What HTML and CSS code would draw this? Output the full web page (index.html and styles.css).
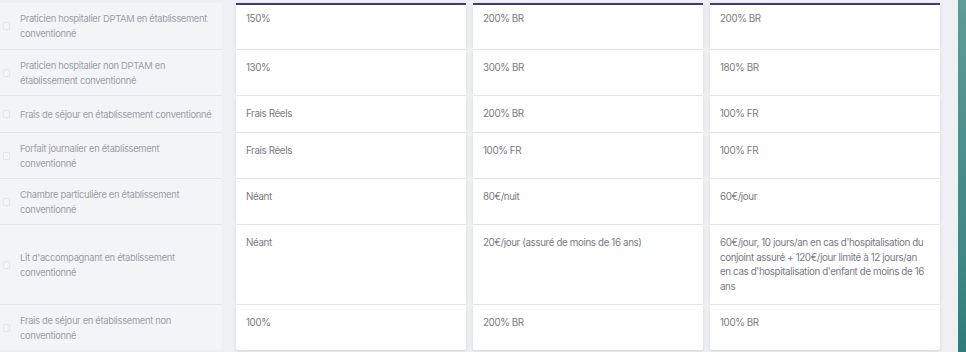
FILE: index.html
```html
<!DOCTYPE html>
<html lang="fr">
<head>
<meta charset="utf-8">
<link rel="stylesheet" href="styles.css">
</head>
<body>
<div class="page">
  <div class="table">
    <div class="label"><span class="check"></span><span>Praticien hospitalier DPTAM en établissement conventionné</span></div>
    <div class="cell c1 first">150%</div>
    <div class="cell c2 first">200% BR</div>
    <div class="cell c3 first">200% BR</div>

    <div class="label"><span class="check"></span><span>Praticien hospitalier non DPTAM en établissement conventionné</span></div>
    <div class="cell c1">130%</div>
    <div class="cell c2">300% BR</div>
    <div class="cell c3">180% BR</div>

    <div class="label"><span class="check"></span><span>Frais de séjour en établissement conventionné</span></div>
    <div class="cell c1">Frais Réels</div>
    <div class="cell c2">200% BR</div>
    <div class="cell c3">100% FR</div>

    <div class="label"><span class="check"></span><span>Forfait journalier en établissement conventionné</span></div>
    <div class="cell c1">Frais Réels</div>
    <div class="cell c2">100% FR</div>
    <div class="cell c3">100% FR</div>

    <div class="label"><span class="check"></span><span>Chambre particulière en établissement conventionné</span></div>
    <div class="cell c1">Néant</div>
    <div class="cell c2">80€/nuit</div>
    <div class="cell c3">60€/jour</div>

    <div class="label"><span class="check"></span><span>Lit d'accompagnant en établissement conventionné</span></div>
    <div class="cell c1">Néant</div>
    <div class="cell c2">20€/jour (assuré de moins de 16 ans)</div>
    <div class="cell c3">60€/jour, 10 jours/an en cas d'hospitalisation du conjoint assuré + 120€/jour limité à 12 jours/an en cas d'hospitalisation d'enfant de moins de 16 ans</div>

    <div class="label last"><span class="check"></span><span>Frais de séjour en établissement non conventionné</span></div>
    <div class="cell c1 last">100%</div>
    <div class="cell c2 last">200% BR</div>
    <div class="cell c3 last">100% BR</div>
  </div>
  <div class="strip"></div>
</div>
</body>
</html>
```
FILE: styles.css
```css
html, body {
  margin: 0;
  padding: 0;
  background: #eef0f4;
  font-family: Inter, "Liberation Sans", sans-serif;
}
.page {
  display: flex;
  height: 352px;
  overflow: hidden;
}
.table {
  display: grid;
  grid-template-columns: 229px repeat(3, 230px);
  grid-template-rows: 50px 46px 37px 46px 46px 80px 45px;
  column-gap: 7px;
  align-content: start;
}
.table > .label:first-child,
.table > .first {
  margin-top: 3px;
}
.label {
  display: flex;
  align-items: center;
  gap: 10px;
  padding: 0 8px 0 3px;
  border-bottom: 1px solid #e4e6eb;
  font-size: 9.4px;
  line-height: 15px;
  letter-spacing: -0.32px;
  color: #9d9ea8;
  background: #f3f4f7;
  margin-right: 7px;
}
.label.last {
  border-bottom: none;
}
.check {
  flex: none;
  width: 5px;
  height: 6px;
  border: 1px solid #e5e6ea;
  border-radius: 1px;
  background: #f4f5f8;
}
.cell {
  background: #fff;
  padding: 11px 10px 0 10px;
  border-bottom: 1px solid #e8e9ee;
  font-size: 9.8px;
  line-height: 14.5px;
  letter-spacing: -0.38px;
  color: #7a7a84;
  box-shadow: 2px 0 4px -2px rgba(60, 60, 90, 0.12), -2px 0 4px -2px rgba(60, 60, 90, 0.12);
}
.cell.first {
  border-top: 2px solid #3d3b86;
  padding-top: 7px;
}
.cell.last {
  border-bottom: none;
  border-radius: 0 0 3px 3px;
  box-shadow: 0 2px 4px rgba(60, 60, 90, 0.12);
}
.strip {
  margin-left: auto;
  width: 8px;
  height: 352px;
  background: linear-gradient(180deg, #5f9b97 0%, #4d8f8c 40%, #3f8784 75%, #2f7c7b 100%);
}
```
